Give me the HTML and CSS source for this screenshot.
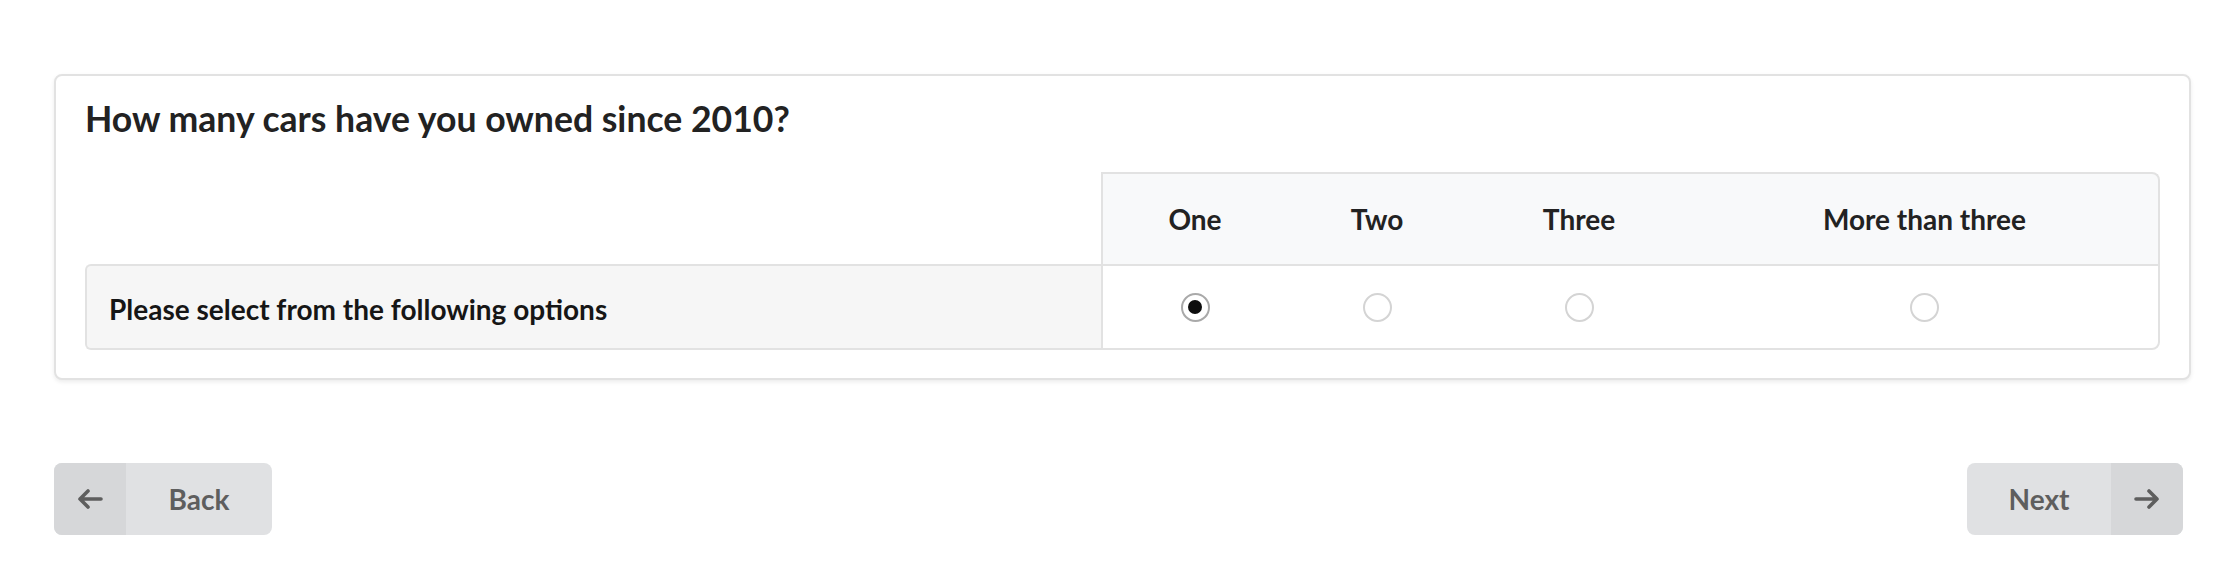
FILE: index.html
```html
<!DOCTYPE html>
<html lang="en">
<head>
<meta charset="utf-8">
<title>Survey</title>
<link rel="stylesheet" href="styles.css">
</head>
<body>
<main class="page">
  <section class="card">
    <h1 class="question">How many cars have you owned since 2010?</h1>
    <div class="matrix">
      <div class="corner"></div>
      <div class="head">
        <div class="head-cell">One</div>
        <div class="head-cell">Two</div>
        <div class="head-cell">Three</div>
        <div class="head-cell">More than three</div>
      </div>
      <div class="label">Please select from the following options</div>
      <div class="cells">
        <label class="cell"><input class="radio" type="radio" name="cars" value="1" checked></label>
        <label class="cell"><input class="radio" type="radio" name="cars" value="2"></label>
        <label class="cell"><input class="radio" type="radio" name="cars" value="3"></label>
        <label class="cell"><input class="radio" type="radio" name="cars" value="4"></label>
      </div>
    </div>
  </section>
  <nav class="nav">
    <button class="btn btn-back" type="button">
      <span class="btn-icon">
        <svg width="26" height="20" viewBox="0 0 26 20" aria-hidden="true"><path d="M24 10H3M11 2L3 10L11 18" fill="none" stroke="#5e5e5e" stroke-width="3.6" stroke-linecap="round" stroke-linejoin="round"/></svg>
      </span>
      <span class="btn-text btn-text-back">Back</span>
    </button>
    <button class="btn btn-next" type="button">
      <span class="btn-text btn-text-next">Next</span>
      <span class="btn-icon">
        <svg width="26" height="20" viewBox="0 0 26 20" aria-hidden="true"><path d="M2 10H23M15 2L23 10L15 18" fill="none" stroke="#5e5e5e" stroke-width="3.6" stroke-linecap="round" stroke-linejoin="round"/></svg>
      </span>
    </button>
  </nav>
</main>
</body>
</html>
```

FILE: styles.css
```css
* { box-sizing: border-box; }

html, body {
  margin: 0;
  padding: 0;
  background: #ffffff;
}

body {
  font-family: Lato, "Liberation Sans", sans-serif;
  color: #1f1f1f;
}

.page {
  padding: 74px 45px 0 54px;
}

.card {
  border: 2px solid #e2e2e2;
  border-radius: 8px;
  background: #fff;
  box-shadow: 0 2px 4px rgba(0, 0, 0, 0.08);
  padding: 21px 29px 28px 29px;
}

.question {
  margin: 0 0 31px 0;
  font-size: 35.6px;
  line-height: 44px;
  font-weight: 700;
  color: #222;
}

.matrix {
  display: grid;
  grid-template-columns: 1016px 1fr;
  grid-template-rows: 92px 86px;
}

.corner {
  background: transparent;
}

.head {
  display: grid;
  grid-template-columns: 184px 180px 224px 1fr;
  background: #f8f9fa;
  border: 2px solid #e2e2e2;
  border-bottom: none;
  border-top-right-radius: 8px;
}

.head-cell {
  display: flex;
  align-items: center;
  justify-content: center;
  font-size: 28px;
  font-weight: 700;
  color: #222;
}

.label {
  display: flex;
  align-items: center;
  padding: 3px 0 0 22px;
  background: #f6f6f6;
  border: 2px solid #e2e2e2;
  border-right: none;
  border-radius: 6px 0 0 6px;
  font-size: 28px;
  font-weight: 700;
  color: #161616;
}

.cells {
  display: grid;
  grid-template-columns: 184px 180px 224px 1fr;
  border: 2px solid #e2e2e2;
  border-bottom-right-radius: 8px;
  background: #fff;
}

.cell {
  display: flex;
  align-items: center;
  justify-content: center;
}

.radio {
  appearance: none;
  -webkit-appearance: none;
  margin: 0;
  width: 29px;
  height: 29px;
  border-radius: 50%;
  border: 2px solid #d4d4d4;
  background: #fff;
  display: grid;
  place-items: center;
}

.radio:checked {
  border-color: #a9a9a9;
}

.radio:checked::after {
  content: "";
  width: 14px;
  height: 14px;
  border-radius: 50%;
  background: #0d0d0d;
}

.nav {
  display: flex;
  justify-content: space-between;
  margin-top: 83px;
  padding-right: 8px;
}

.btn {
  display: flex;
  align-items: stretch;
  height: 72px;
  padding: 0;
  border: none;
  border-radius: 8px;
  overflow: hidden;
  background: #e0e1e3;
  font-family: Lato, "Liberation Sans", sans-serif;
  font-size: 28px;
  font-weight: 700;
  color: #5e5e5e;
  cursor: pointer;
}

.btn-icon {
  width: 72px;
  display: flex;
  align-items: center;
  justify-content: center;
  background: #d6d7d9;
}

.btn-text {
  display: flex;
  align-items: center;
  justify-content: center;
}

.btn-text-back {
  width: 146px;
}

.btn-text-next {
  width: 144px;
}
```
